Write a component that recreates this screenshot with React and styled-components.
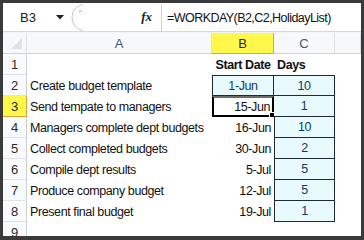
import React from "react";
import styled, { createGlobalStyle } from "styled-components";

const Global = createGlobalStyle`
  html, body { margin: 0; padding: 0; background: #3a3a3a; }
  body { font-family: "Liberation Sans", Arial, sans-serif; }
`;

const Frame = styled.div`
  width: 364px;
  height: 240px;
  box-sizing: border-box;
  padding: 3px 3px 4px 3px;
  background: #3a3a3a;
`;

const Window = styled.div`
  height: 100%;
  background: #ffffff;
  display: flex;
  flex-direction: column;
  overflow: hidden;
  font-size: 12.5px;
  letter-spacing: -0.4px;
  color: #111;
`;

const FormulaBar = styled.div`
  height: 29px;
  flex: none;
  display: flex;
  align-items: stretch;
  background: #fff;
  border-bottom: 1px solid #d4d9de;
  box-sizing: border-box;
`;

const NameBox = styled.div`
  width: 34px;
  display: flex;
  align-items: center;
  padding-left: 17px;
  font-size: 13px;
  letter-spacing: 0;
  color: #1a1a1a;
`;

const Drop = styled.div`
  width: 12px;
  display: flex;
  align-items: center;
  justify-content: center;
`;

const Splitter = styled.div`
  width: 95px;
  position: relative;
  display: flex;
  align-items: center;
  justify-content: flex-end;
  padding-right: 9px;
  box-sizing: border-box;
`;

const Fx = styled.span`
  font-family: "Liberation Serif", "Times New Roman", serif;
  font-style: italic;
  font-weight: bold;
  font-size: 13px;
  letter-spacing: 0;
  color: #222;
`;

const FormulaInput = styled.div`
  flex: 1;
  display: flex;
  align-items: center;
  padding-left: 5px;
  border-left: 1px solid #c9cfd6;
  margin: 2px 0 0;
  font-size: 12.5px;
  letter-spacing: -0.55px;
`;

const Gap = styled.div`
  height: 1px;
  flex: none;
  background: #f1f3f5;
`;

const Row = styled.div`
  display: grid;
  grid-template-columns: 24px 185px 62px 61px 1fr;
  height: ${(p) => p.$h || 21}px;
  flex: none;
`;

const ColHead = styled.div`
  display: flex;
  align-items: center;
  justify-content: center;
  box-sizing: border-box;
  background: ${(p) => (p.$sel ? "#fff84a" : "#f7f8fa")};
  border-right: 1px solid ${(p) => (p.$sel ? "#e2a23a" : "#dde1e6")};
  border-bottom: 1px solid ${(p) => (p.$sel ? "#e2a23a" : "#cdd3da")};
  color: ${(p) => (p.$sel ? "#2a2a2a" : "#4a5668")};
  font-size: 13px;
  letter-spacing: 0;
`;

const Corner = styled(ColHead)`
  position: relative;
  &::after {
    content: "";
    position: absolute;
    right: 4px;
    bottom: 4px;
    border-style: solid;
    border-width: 0 0 11px 11px;
    border-color: transparent transparent #dfe3e7 transparent;
  }
`;

const RowHead = styled.div`
  display: flex;
  align-items: center;
  justify-content: center;
  box-sizing: border-box;
  background: ${(p) => (p.$sel ? "#fff84a" : "#f9fafb")};
  border-right: 1px solid ${(p) => (p.$sel ? "#e2a23a" : "#c9d0d8")};
  border-bottom: 1px solid ${(p) => (p.$sel ? "#e2a23a" : "#dfe4ea")};
  color: #2b2b2b;
  font-size: 13px;
  letter-spacing: 0;
`;

const Cell = styled.div`
  display: flex;
  align-items: center;
  box-sizing: border-box;
  position: relative;
  white-space: nowrap;
  padding: 0 3px;
  justify-content: ${(p) =>
    p.$align === "right" ? "flex-end" : p.$align === "center" ? "center" : "flex-start"};
  font-weight: ${(p) => (p.$bold ? "bold" : "normal")};
  background: ${(p) => (p.$box ? "#e8fafb" : "#fff")};
  border-right: ${(p) => (p.$box ? "1px solid #1f2a36" : "none")};
  border-bottom: ${(p) => (p.$box ? "1px solid #1f2a36" : "none")};
  border-left: ${(p) => (p.$left ? "1px solid #1f2a36" : "none")};
  border-top: ${(p) => (p.$top ? "1px solid #1f2a36" : "none")};
  color: ${(p) => (p.$blue ? "#10386a" : "#111")};
`;

const Selected = styled(Cell)`
  border: 2px solid #000;
  border-top-color: #6d6d6d;
  background: #fff;
  padding-right: 2px;
`;

const Handle = styled.span`
  position: absolute;
  right: -4px;
  bottom: -4px;
  width: 5px;
  height: 5px;
  background: #000;
  border: 1px solid #fff;
`;

const tasks = [
  ["Create budget template", "1-Jun", "10"],
  ["Send tempate to managers", "15-Jun", "1"],
  ["Managers complete dept budgets", "16-Jun", "10"],
  ["Collect completed budgets", "30-Jun", "2"],
  ["Compile dept results", "5-Jul", "5"],
  ["Produce company budget", "12-Jul", "5"],
  ["Present final budget", "19-Jul", "1"],
];

export default function App() {
  return (
    <>
      <Global />
      <Frame>
        <Window>
          <FormulaBar>
            <NameBox>B3</NameBox>
            <Drop>
              <svg width="8" height="5" viewBox="0 0 8 5">
                <path d="M0 0 H8 L4 4.5 Z" fill="#222" />
              </svg>
            </Drop>
            <Splitter>
              <svg
                width="20"
                height="29"
                viewBox="0 0 20 29"
                style={{ position: "absolute", left: 3, top: 0 }}
              >
                <path d="M14 1.5 Q3 4 3 14.5 Q3 25 14 27.5" fill="none" stroke="#c3c9d0" strokeWidth="1" />
                <path d="M10 9 L11.5 7.5 L13 9" fill="none" stroke="#9aa3ad" strokeWidth="1" />
              </svg>
              <Fx>fx</Fx>
            </Splitter>
            <FormulaInput>=WORKDAY(B2,C2,HolidayList)</FormulaInput>
          </FormulaBar>
          <Gap />
          <Row $h={21}>
            <Corner />
            <ColHead>A</ColHead>
            <ColHead $sel>B</ColHead>
            <ColHead>C</ColHead>
            <ColHead />
          </Row>
          <Row>
            <RowHead>1</RowHead>
            <Cell />
            <Cell $align="center" $bold>Start Date</Cell>
            <Cell $bold>Days</Cell>
            <Cell />
          </Row>
          {tasks.map(([task, date, days], i) => {
            const r = i + 2;
            const first = r === 2;
            const sel = r === 3;
            return (
              <Row key={r}>
                <RowHead $sel={sel}>{r}</RowHead>
                <Cell>{task}</Cell>
                {sel ? (
                  <Selected $align="right">
                    {date}
                    <Handle />
                  </Selected>
                ) : first ? (
                  <Cell $align="center" $box $left $top $blue>
                    {date}
                  </Cell>
                ) : (
                  <Cell $align="right">{date}</Cell>
                )}
                <Cell $align="center" $box $top={first} $left={!first && !sel} $blue>
                  {days}
                </Cell>
                <Cell />
              </Row>
            );
          })}
          <Row>
            <RowHead>9</RowHead>
            <Cell />
            <Cell />
            <Cell />
            <Cell />
          </Row>
        </Window>
      </Frame>
    </>
  );
}
